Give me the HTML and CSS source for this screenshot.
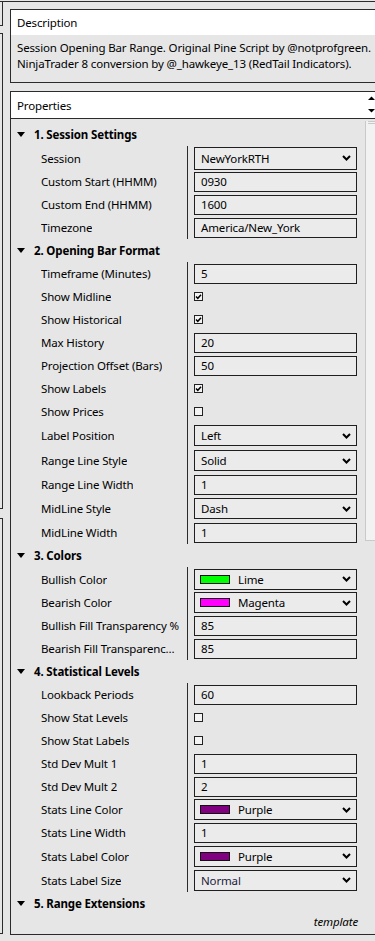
FILE: index.html
```html
<!DOCTYPE html>
<html>
<head>
<meta charset="utf-8">
<link rel="stylesheet" href="styles.css">
</head>
<body>
<div class="topline"></div>
<div class="layout">
  <div class="leftstrip">
    <div class="frag frag-a"></div>
    <div class="frag frag-b"></div>
    <div class="frag frag-c"></div>
  </div>
  <div class="main">
    <div class="panel desc">
      <div class="desc-head">Description</div>
      <div class="desc-body">Session Opening Bar Range. Original Pine Script by @notprofgreen.<br>NinjaTrader 8 conversion by @_hawkeye_13 (RedTail Indicators).</div>
    </div>
    <div class="panel props">
      <div class="props-head">
        <span>Properties</span>
        <svg class="spinner" width="9" height="26" viewBox="0 0 9 26"><polygon points="2,8 9,8 5.5,4.5" fill="#000"/><polygon points="2,17 9,17 5.5,20.5" fill="#000"/></svg>
      </div>
      <div class="props-body">
        <div class="grid">
          <div class="sec-head"><span class="tri"></span>1. Session Settings</div>
          <div class="row h24"><div class="lbl"><span>Session</span></div><div class="val"><div class="dd tall"><span>NewYorkRTH</span><svg class="chev" width="9" height="6" viewBox="0 0 9 6"><polyline points="1,1 4.5,4.5 8,1" fill="none" stroke="#000" stroke-width="2"/></svg></div></div></div>
          <div class="row"><div class="lbl"><span>Custom Start (HHMM)</span></div><div class="val"><div class="tb">0930</div></div></div>
          <div class="row"><div class="lbl"><span>Custom End (HHMM)</span></div><div class="val"><div class="tb">1600</div></div></div>
          <div class="row"><div class="lbl"><span>Timezone</span></div><div class="val"><div class="tb">America/New_York</div></div></div>

          <div class="sec-head"><span class="tri"></span>2. Opening Bar Format</div>
          <div class="row"><div class="lbl"><span>Timeframe (Minutes)</span></div><div class="val"><div class="tb">5</div></div></div>
          <div class="row"><div class="lbl"><span>Show Midline</span></div><div class="val"><div class="cb"><svg width="7" height="7" viewBox="0 0 7 7"><polyline points="1,3.5 2.8,5.3 6,1.8" fill="none" stroke="#000" stroke-width="1.5"/></svg></div></div></div>
          <div class="row"><div class="lbl"><span>Show Historical</span></div><div class="val"><div class="cb"><svg width="7" height="7" viewBox="0 0 7 7"><polyline points="1,3.5 2.8,5.3 6,1.8" fill="none" stroke="#000" stroke-width="1.5"/></svg></div></div></div>
          <div class="row"><div class="lbl"><span>Max History</span></div><div class="val"><div class="tb">20</div></div></div>
          <div class="row"><div class="lbl"><span>Projection Offset (Bars)</span></div><div class="val"><div class="tb">50</div></div></div>
          <div class="row"><div class="lbl"><span>Show Labels</span></div><div class="val"><div class="cb"><svg width="7" height="7" viewBox="0 0 7 7"><polyline points="1,3.5 2.8,5.3 6,1.8" fill="none" stroke="#000" stroke-width="1.5"/></svg></div></div></div>
          <div class="row"><div class="lbl"><span>Show Prices</span></div><div class="val"><div class="cb"></div></div></div>
          <div class="row h25"><div class="lbl"><span>Label Position</span></div><div class="val"><div class="dd"><span>Left</span><svg class="chev" width="9" height="6" viewBox="0 0 9 6"><polyline points="1,1 4.5,4.5 8,1" fill="none" stroke="#000" stroke-width="2"/></svg></div></div></div>
          <div class="row h25"><div class="lbl"><span>Range Line Style</span></div><div class="val"><div class="dd"><span>Solid</span><svg class="chev" width="9" height="6" viewBox="0 0 9 6"><polyline points="1,1 4.5,4.5 8,1" fill="none" stroke="#000" stroke-width="2"/></svg></div></div></div>
          <div class="row"><div class="lbl"><span>Range Line Width</span></div><div class="val"><div class="tb">1</div></div></div>
          <div class="row h25"><div class="lbl"><span>MidLine Style</span></div><div class="val"><div class="dd"><span>Dash</span><svg class="chev" width="9" height="6" viewBox="0 0 9 6"><polyline points="1,1 4.5,4.5 8,1" fill="none" stroke="#000" stroke-width="2"/></svg></div></div></div>
          <div class="row"><div class="lbl"><span>MidLine Width</span></div><div class="val"><div class="tb">1</div></div></div>

          <div class="sec-head"><span class="tri"></span>3. Colors</div>
          <div class="row h24"><div class="lbl"><span>Bullish Color</span></div><div class="val"><div class="dd color"><span class="cval"><span class="swatch lime"></span>Lime</span><svg class="chev" width="9" height="6" viewBox="0 0 9 6"><polyline points="1,1 4.5,4.5 8,1" fill="none" stroke="#000" stroke-width="2"/></svg></div></div></div>
          <div class="row"><div class="lbl"><span>Bearish Color</span></div><div class="val"><div class="dd color"><span class="cval"><span class="swatch magenta"></span>Magenta</span><svg class="chev" width="9" height="6" viewBox="0 0 9 6"><polyline points="1,1 4.5,4.5 8,1" fill="none" stroke="#000" stroke-width="2"/></svg></div></div></div>
          <div class="row"><div class="lbl"><span>Bullish Fill Transparency %</span></div><div class="val"><div class="tb">85</div></div></div>
          <div class="row"><div class="lbl"><span>Bearish Fill Transparency %</span></div><div class="val"><div class="tb">85</div></div></div>

          <div class="sec-head"><span class="tri"></span>4. Statistical Levels</div>
          <div class="row"><div class="lbl"><span>Lookback Periods</span></div><div class="val"><div class="tb">60</div></div></div>
          <div class="row"><div class="lbl"><span>Show Stat Levels</span></div><div class="val"><div class="cb"></div></div></div>
          <div class="row"><div class="lbl"><span>Show Stat Labels</span></div><div class="val"><div class="cb"></div></div></div>
          <div class="row"><div class="lbl"><span>Std Dev Mult 1</span></div><div class="val"><div class="tb">1</div></div></div>
          <div class="row"><div class="lbl"><span>Std Dev Mult 2</span></div><div class="val"><div class="tb">2</div></div></div>
          <div class="row"><div class="lbl"><span>Stats Line Color</span></div><div class="val"><div class="dd color"><span class="cval"><span class="swatch purple"></span>Purple</span><svg class="chev" width="9" height="6" viewBox="0 0 9 6"><polyline points="1,1 4.5,4.5 8,1" fill="none" stroke="#000" stroke-width="2"/></svg></div></div></div>
          <div class="row"><div class="lbl"><span>Stats Line Width</span></div><div class="val"><div class="tb">1</div></div></div>
          <div class="row h24"><div class="lbl"><span>Stats Label Color</span></div><div class="val"><div class="dd color"><span class="cval"><span class="swatch purple"></span>Purple</span><svg class="chev" width="9" height="6" viewBox="0 0 9 6"><polyline points="1,1 4.5,4.5 8,1" fill="none" stroke="#000" stroke-width="2"/></svg></div></div></div>
          <div class="row h24"><div class="lbl"><span>Stats Label Size</span></div><div class="val"><div class="dd"><span class="navy">Normal</span><svg class="chev" width="9" height="6" viewBox="0 0 9 6"><polyline points="1,1 4.5,4.5 8,1" fill="none" stroke="#000" stroke-width="2"/></svg></div></div></div>

          <div class="sec-head"><span class="tri"></span>5. Range Extensions</div>
          <div class="footer">template</div>
        </div>
        <div class="scroll">
          <div class="thumb"><div class="grip"></div></div>
        </div>
      </div>
    </div>
  </div>
</div>
</body>
</html>
```

FILE: styles.css
```css
* { box-sizing: border-box; }
html, body { margin: 0; padding: 0; }
body {
  width: 375px;
  height: 941px;
  overflow: hidden;
  background: #e6e6e6;
  font-family: "Noto Sans", "Open Sans", sans-serif;
  font-size: 11.5px;
  letter-spacing: -0.15px;
  color: #000;
}
.topline { margin-top: 1px; border-top: 1px solid #2b2b2b; }
.layout { display: flex; }
.leftstrip { width: 10px; flex: none; display: flex; flex-direction: column; }
.frag { width: 3px; border-right: 1px solid #2b2b2b; border-bottom: 1px solid #2b2b2b; }
.frag-a { height: 24px; }
.frag-b { margin-top: 7px; height: 476px; border-top: 1px solid #2b2b2b; }
.frag-c { margin-top: 9px; height: 416px; border-top: 1px solid #2b2b2b; }

.main { flex: 1; min-width: 0; padding-top: 7px; }
.panel { border: 1px solid #2b2b2b; border-right: none; }
.desc-head { background: #fff; height: 25px; line-height: 25px; padding-left: 6px; }
.desc-body { padding: 5px 0 10px 6px; line-height: 16px; white-space: nowrap; overflow: hidden; }
.props { margin-top: 8px; }
.props-head {
  background: #fff;
  height: 27px;
  border-bottom: 1px solid #2b2b2b;
  padding-left: 6px;
  display: flex;
  align-items: center;
  justify-content: space-between;
}
.spinner { display: block; flex: none; }
.props-body { display: flex; height: 815px; }
.grid { flex: 1; min-width: 0; padding-top: 4px; }
.scroll { width: 10px; flex: none; }
.thumb {
  height: 420px;
  background: #f2f2f2;
  border-left: 1px solid #c9c9c9;
  border-bottom: 1px solid #c9c9c9;
}
.grip { margin: 2px 0 0 2px; height: 3px; border-top: 1px solid #c9c9c9; border-bottom: 1px solid #c9c9c9; }

.sec-head {
  height: 23px;
  display: flex;
  align-items: center;
  padding-left: 6px;
  font-weight: bold;
}
.tri {
  width: 0; height: 0;
  border-left: 4.5px solid transparent;
  border-right: 4.5px solid transparent;
  border-top: 5px solid #000;
  margin-right: 9px;
}
.row { display: flex; height: 23px; }
.row.h24 { height: 24px; }
.row.h25 { height: 25px; }
.lbl {
  width: 177px;
  flex: none;
  border-right: 1px solid #2b2b2b;
  padding-left: 30px;
  padding-right: 7px;
  display: flex;
  align-items: center;
  white-space: nowrap;
  overflow: hidden;
}
.lbl span { min-width: 0; overflow: hidden; text-overflow: ellipsis; }
.val { flex: none; width: 169px; padding-left: 6px; display: flex; align-items: center; }
.tb {
  width: 163px; height: 20px;
  border: 1px solid #1f1f1f;
  background: #ebebeb;
  padding-left: 6px;
  line-height: 18px;
  white-space: nowrap;
}
.dd {
  width: 163px; height: 21px;
  border: 1px solid #1f1f1f;
  background: #ebebeb;
  padding-left: 6px;
  padding-right: 5px;
  display: flex;
  align-items: center;
  justify-content: space-between;
  white-space: nowrap;
}
.dd.tall { height: 23px; }
.dd.color { padding-left: 5px; }
.chev { display: block; flex: none; }
.cval { display: flex; align-items: center; }
.swatch { width: 30px; height: 9px; border: 1px solid #111; margin-right: 8px; }
.lime { background: #00ff00; }
.magenta { background: #ff00ff; }
.purple { background: #800080; }
.navy { color: #1a1a40; }
.cb {
  width: 9px; height: 9px;
  border: 1px solid #222;
  background: #f4f4f4;
  display: flex; align-items: center; justify-content: center;
}
.cb svg { display: block; }
.footer { text-align: right; padding-right: 7px; font-style: italic; line-height: 14px; }
```
